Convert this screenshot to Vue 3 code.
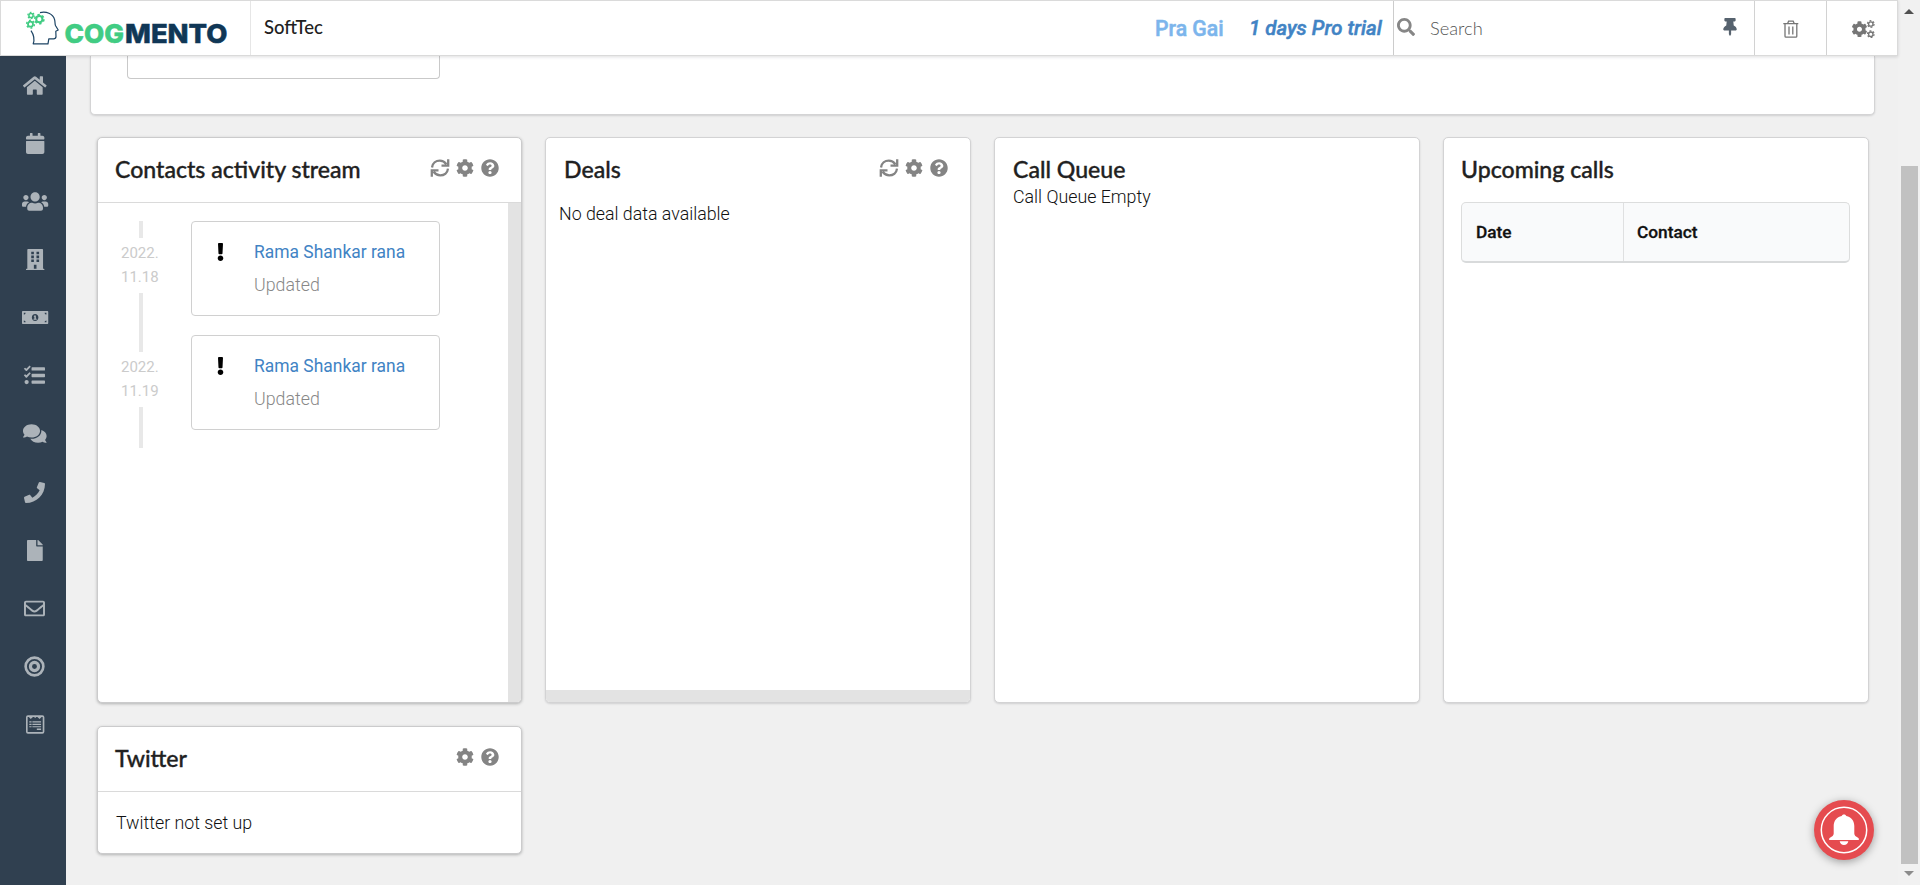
<script setup>
const home = 'M280.37 148.26L96 300.11V464a16 16 0 0 0 16 16l112.06-.29a16 16 0 0 0 15.92-16V368a16 16 0 0 1 16-16h64a16 16 0 0 1 16 16v95.64a16 16 0 0 0 16 16.05L464 480a16 16 0 0 0 16-16V300L295.67 148.26a12.19 12.19 0 0 0-15.3 0zM571.6 251.47L488 182.56V44.05a12 12 0 0 0-12-12h-56a12 12 0 0 0-12 12v72.61L318.47 43a48 48 0 0 0-61 0L4.34 251.47a12 12 0 0 0-1.6 16.9l25.5 31A12 12 0 0 0 45.15 301l235.22-193.74a12.19 12.19 0 0 1 15.3 0L530.9 301a12 12 0 0 0 16.9-1.6l25.5-31a12 12 0 0 0-1.7-16.93z'
const calendar = 'M12 192h424c6.6 0 12 5.4 12 12v260c0 26.5-21.5 48-48 48H48c-26.5 0-48-21.5-48-48V204c0-6.6 5.4-12 12-12zm436-44v-36c0-26.5-21.5-48-48-48h-48V12c0-6.6-5.4-12-12-12h-40c-6.6 0-12 5.4-12 12v52H160V12c0-6.6-5.4-12-12-12h-40c-6.6 0-12 5.4-12 12v52H48C21.5 64 0 85.5 0 112v36c0 6.6 5.4 12 12 12h424c6.6 0 12-5.4 12-12z'
const users = 'M96 224c35.3 0 64-28.7 64-64s-28.7-64-64-64-64 28.7-64 64 28.7 64 64 64zm448 0c35.3 0 64-28.7 64-64s-28.7-64-64-64-64 28.7-64 64 28.7 64 64 64zm32 32h-64c-17.6 0-33.5 7.1-45.1 18.6 40.3 22.1 68.9 62 75.1 109.4h66c17.7 0 32-14.3 32-32v-32c0-35.3-28.7-64-64-64zm-256 0c61.9 0 112-50.1 112-112S381.9 32 320 32 208 82.1 208 144s50.1 112 112 112zm76.8 32h-8.3c-20.8 10-43.9 16-68.5 16s-47.6-6-68.5-16h-8.3C179.6 288 128 339.6 128 403.2V432c0 26.5 21.5 48 48 48h288c26.5 0 48-21.5 48-48v-28.8c0-63.6-51.6-115.2-115.2-115.2zm-223.7-13.4C161.5 263.1 145.6 256 128 256H64c-35.3 0-64 28.7-64 64v32c0 17.7 14.3 32 32 32h65.9c6.3-47.4 34.9-87.3 75.2-109.4z'
const building = 'M436 480h-20V24c0-13-11-24-24-24H56C43 0 32 11 32 24v456H12c-7 0-12 5-12 12v20h448v-20c0-7-5-12-12-12zM128 64h64v64h-64zM128 160h64v64h-64zM128 256h64v64h-64zM256 64h64v64h-64zM256 160h64v64h-64zM256 256h64v64h-64zM192 384h64v96h-64z'
const money = 'M24 96h592c13 0 24 11 24 24v272c0 13-11 24-24 24H24c-13 0-24-11-24-24V120c0-13 11-24 24-24zM44 138v44c26 0 44-18 44-44zM596 138v44c-26 0-44-18-44-44zM44 374v-44c26 0 44 18 44 44zM596 374v-44c-26 0-44 18-44 44zM320 172c-46 0-80 38-80 84s34 84 80 84 80-38 80-84-34-84-80-84zM298 206h40v80h20v26h-76v-26h20v-48h-16z'
const tasks = 'M200 56h296q16 0 16 16v48q0 16-16 16H200q-16 0-16-16V72q0-16 16-16zM200 216h296q16 0 16 16v48q0 16-16 16H200q-16 0-16-16v-48q0-16 16-16zM200 376h296q16 0 16 16v48q0 16-16 16H200q-16 0-16-16v-48q0-16 16-16zM-4 92l30-28 32 28 78-78 30 30-92 98q-16 14-32 0zM-4 252l30-28 32 28 78-78 30 30-92 98q-16 14-32 0zM12 416a52 52 0 1 0 104 0 52 52 0 1 0-104 0z'
const comments = 'M416 192c0-88.4-93.1-160-208-160S0 103.6 0 192c0 34.3 14.1 65.9 38 92-13.4 30.2-35.5 54.2-35.8 54.5-2.2 2.3-2.8 5.7-1.5 8.7S4.8 352 8 352c36.6 0 66.9-12.3 88.7-25 32.2 15.7 70.3 25 111.3 25 114.9 0 208-71.6 208-160zm122 220c23.9-26 38-57.7 38-92 0-66.9-53.5-124.2-129.3-148.1.9 6.6 1.3 13.3 1.3 20.1 0 105.9-107.7 192-240 192-10.8 0-21.3-.8-31.7-1.9C207.8 439.6 281.8 480 368 480c41 0 79.1-9.2 111.3-25 21.8 12.7 52.1 25 88.7 25 3.2 0 6.1-1.9 7.3-4.8 1.3-2.9.7-6.3-1.5-8.7-.3-.3-22.4-24.2-35.8-54.5z'
const phone = 'M493.4 24.6l-104-24c-11.3-2.6-22.9 3.3-27.5 13.9l-48 112c-4.2 9.8-1.4 21.3 6.9 28l60.6 49.6c-36 76.7-98.9 140.5-177.2 177.2l-49.6-60.6c-6.8-8.3-18.2-11.1-28-6.9l-112 48C3.9 366.5-2 378.1.6 389.4l24 104C27.1 504.2 36.7 512 48 512c256.1 0 464-207.5 464-464 0-11.2-7.7-20.9-18.6-23.4z'
const file = 'M224 136V0H24C10.7 0 0 10.7 0 24v464c0 13.3 10.7 24 24 24h336c13.3 0 24-10.7 24-24V160H248c-13.2 0-24-10.8-24-24zm160-14.1v6.1H256V0h6.1c6.4 0 12.5 2.5 17 7l97.9 98c4.5 4.5 7 10.6 7 16.9z'
const envelope = 'M464 64H48C21.49 64 0 85.49 0 112v288c0 26.51 21.49 48 48 48h416c26.51 0 48-21.49 48-48V112c0-26.51-21.49-48-48-48zm0 48v40.805c-22.422 18.259-58.168 46.651-134.587 106.49-16.841 13.247-50.201 45.072-73.413 44.701-23.208.375-56.579-31.459-73.413-44.701C106.18 199.465 70.425 171.067 48 152.805V112h416zM48 400V214.398c22.914 18.251 55.409 43.862 104.938 82.646 21.857 17.205 60.134 55.186 103.062 54.955 42.717.231 80.509-37.199 103.053-54.947 49.528-38.783 82.032-64.401 104.947-82.653V400H48z'
const bullseye = 'M8 256a248 248 0 1 0 496 0 248 248 0 1 0-496 0zM72 256a184 184 0 1 0 368 0 184 184 0 1 0-368 0zM118 256a138 138 0 1 0 276 0 138 138 0 1 0-276 0zM196 256a60 60 0 1 0 120 0 60 60 0 1 0-120 0z'
const form = 'M48 32h352q48 0 48 48v352q0 48-48 48H48q-48 0-48-48V80q0-48 48-48zM40 72v360q0 8 8 8h352q8 0 8-8V72h-28l-48 52-54-52h-26l-28 28-28-28h-26l-54 52-48-52zM80 176h56v30H80zM80 236h56v30H80zM80 296h56v30H80zM156 176h212v30H156zM156 236h212v30H156zM156 296h212v30H156zM264 356h104v36H264z'
const cog = 'M487.4 315.7l-42.6-24.6c4.3-23.2 4.3-47 0-70.2l42.6-24.6c4.9-2.8 7.1-8.6 5.5-14-11.1-35.6-30-67.8-54.7-94.6-3.8-4.1-10-5.1-14.8-2.3L380.8 110c-17.9-15.4-38.5-27.3-60.8-35.1V25.8c0-5.6-3.9-10.5-9.4-11.7-36.7-8.2-74.3-7.8-109.2 0-5.5 1.2-9.4 6.1-9.4 11.7V75c-22.2 7.9-42.8 19.8-60.8 35.1L88.7 85.5c-4.9-2.8-11-1.9-14.8 2.3-24.7 26.7-43.6 58.9-54.7 94.6-1.7 5.4.6 11.2 5.5 14L67.3 221c-4.3 23.2-4.3 47 0 70.2l-42.6 24.6c-4.9 2.8-7.1 8.6-5.5 14 11.1 35.6 30 67.8 54.7 94.6 3.8 4.1 10 5.1 14.8 2.3l42.6-24.6c17.9 15.4 38.5 27.3 60.8 35.1v49.2c0 5.6 3.9 10.5 9.4 11.7 36.7 8.2 74.3 7.8 109.2 0 5.5-1.2 9.4-6.1 9.4-11.7v-49.2c22.2-7.9 42.8-19.8 60.8-35.1l42.6 24.6c4.9 2.8 11 1.9 14.8-2.3 24.7-26.7 43.6-58.9 54.7-94.6 1.5-5.5-.7-11.3-5.6-14.1zM256 336c-44.1 0-80-35.9-80-80s35.9-80 80-80 80 35.9 80 80-35.9 80-80 80z'
const question = 'M504 256c0 136.997-111.043 248-248 248S8 392.997 8 256C8 119.083 119.043 8 256 8s248 111.083 248 248zM262.655 90c-54.497 0-89.255 22.957-116.549 63.758-3.536 5.286-2.353 12.415 2.715 16.258l34.699 26.31c5.205 3.947 12.621 3.008 16.665-2.122 17.864-22.658 30.113-35.797 57.303-35.797 20.429 0 45.698 13.148 45.698 32.958 0 14.976-12.363 22.667-32.534 33.976C247.128 238.528 216 254.941 216 296v4c0 6.627 5.373 12 12 12h56c6.627 0 12-5.373 12-12v-1.333c0-28.462 83.186-29.647 83.186-106.667 0-58.002-60.165-102-116.531-102zM256 338c-25.365 0-46 20.635-46 46 0 25.364 20.635 46 46 46s46-20.636 46-46c0-25.365-20.635-46-46-46z'
const search = 'M505 442.7L405.3 343c-4.5-4.5-10.6-7-17-7H372c27.6-35.3 44-79.7 44-128C416 93.1 322.9 0 208 0S0 93.1 0 208s93.1 208 208 208c48.3 0 92.7-16.4 128-44v16.3c0 6.4 2.5 12.5 7 17l99.7 99.7c9.4 9.4 24.6 9.4 33.9 0l28.3-28.3c9.4-9.4 9.4-24.6.1-34zM208 336c-70.7 0-128-57.2-128-128 0-70.7 57.2-128 128-128 70.7 0 128 57.2 128 128 0 70.7-57.2 128-128 128z'
const pin = 'M298.028 214.267L285.793 96H328c13.255 0 24-10.745 24-24V24c0-13.255-10.745-24-24-24H56C42.745 0 32 10.745 32 24v48c0 13.255 10.745 24 24 24h42.207L85.972 214.267C37.465 236.82 0 277.261 0 328c0 13.255 10.745 24 24 24h136v104.007c0 1.242.289 2.467.845 3.578l24 48c2.941 5.882 11.364 5.893 14.311 0l24-48a8.008 8.008 0 0 0 .845-3.578V352h136c13.255 0 24-10.745 24-24-.001-51.183-37.983-91.42-85.973-113.733z'
const exclamation = 'M176 432c0 44.112-35.888 80-80 80s-80-35.888-80-80 35.888-80 80-80 80 35.888 80 80zM25.26 25.199l13.6 272C39.499 309.972 50.041 320 62.83 320h66.34c12.789 0 23.331-10.028 23.97-22.801l13.6-272C167.425 11.49 156.496 0 142.77 0H49.23C35.504 0 24.575 11.49 25.26 25.199z'

const nav = [
  { name: 'home', w: 576, d: home },
  { name: 'calendar', w: 448, d: calendar },
  { name: 'contacts', w: 640, d: users },
  { name: 'companies', w: 448, d: building },
  { name: 'deals', w: 640, d: money },
  { name: 'tasks', w: 512, d: tasks },
  { name: 'comments', w: 576, d: comments },
  { name: 'calls', w: 512, d: phone },
  { name: 'documents', w: 384, d: file },
  { name: 'email', w: 512, d: envelope },
  { name: 'campaigns', w: 512, d: bullseye },
  { name: 'forms', w: 448, d: form },
]

const events = [
  { id: 1, year: '2022.', day: '11.18', name: 'Rama Shankar rana', action: 'Updated' },
  { id: 2, year: '2022.', day: '11.19', name: 'Rama Shankar rana', action: 'Updated' },
]
</script>

<template>
  <div class="app">
    <div class="page">
      <header class="topbar">
        <div class="brand">
          <svg width="249" height="54" viewBox="1 1 249 54">
            <g fill="none" stroke="#1d4464" stroke-width="1.2" stroke-linejoin="round">
              <path d="M40 12.6c6-1.6 13 1 14.600 7 .7 2.600.1 4.400 1 6.200l2.600 4.200-2.400 1.200.2 5.400c-.1 1.600-1 2.200-2.400 2.200h-4.800l-.8 5H33.200c1.600-4.500.6-9-2.200-13.200" />
            </g>
            <g fill="none" stroke="#41cc83">
              <circle cx="31" cy="15.500" r="2.100" stroke-width="1.500" />
              <circle cx="31" cy="15.500" r="3.200" stroke-width="1.200" stroke-dasharray="1.700 1.650" />
              <circle cx="39.300" cy="19.200" r="3.100" stroke-width="2" />
              <circle cx="39.300" cy="19.200" r="4.600" stroke-width="1.600" stroke-dasharray="2.400 2.410" />
              <circle cx="30.500" cy="24.200" r="2.500" stroke-width="1.800" />
              <circle cx="30.500" cy="24.200" r="3.900" stroke-width="1.400" stroke-dasharray="2 2.080" />
            </g>
            <text class="logo" x="64.500" y="43" textLength="59.500" lengthAdjust="spacingAndGlyphs" fill="#41cc83" stroke="#41cc83">COG</text>
            <text class="logo" x="125" y="43" textLength="102.500" lengthAdjust="spacingAndGlyphs" fill="#103756" stroke="#103756">MENTO</text>
          </svg>
        </div>
        <div class="company">SoftTec</div>
        <div class="user">Pra Gai</div>
        <div class="trial">1 days Pro trial</div>
        <div class="search">
          <svg class="search-icon" viewBox="0 0 512 512" width="18" height="18"><path :d="search" /></svg>
          <span class="placeholder">Search</span>
          <svg class="pin" viewBox="0 0 384 512" width="14" height="18"><path :d="pin" /></svg>
        </div>
        <div class="tool">
          <svg width="16" height="18" viewBox="0 0 16 18" fill="none" stroke="#767676" stroke-width="1.300">
            <path d="M.3 3.600h15M4.600 3.400L5.600 1.200h4.600l1 2.200M2 4v12.200q0 1 1 1h9.800q1 0 1-1V4M6 6.500v8M9.800 6.500v8" />
          </svg>
        </div>
        <div class="tool last">
          <svg width="23" height="18" viewBox="0 0 23 18">
            <g transform="translate(-.6 1.100) scale(.0315)"><path :d="cog" fill="#767676" /></g>
            <g fill="none" stroke="#767676">
              <circle cx="18.800" cy="4" r="2.200" stroke-width="1.300" />
              <circle cx="18.800" cy="4" r="3.300" stroke-width="1.200" stroke-dasharray="1.900 1.550" />
              <circle cx="18.800" cy="14.200" r="2.200" stroke-width="1.300" />
              <circle cx="18.800" cy="14.200" r="3.300" stroke-width="1.200" stroke-dasharray="1.900 1.550" />
            </g>
          </svg>
        </div>
      </header>

      <div class="body">
        <nav class="sidebar">
          <a v-for="item in nav" :key="item.name" class="nav-item">
            <svg :viewBox="`0 0 ${item.w} 512`" :width="item.w * 0.041" height="21"><path :d="item.d" fill-rule="evenodd" /></svg>
          </a>
        </nav>

        <main class="content">
          <section class="upper-panel"><div class="upper-box"></div></section>

          <div class="grid">
            <section class="card stream">
              <div class="card-head">
                <h2>Contacts activity stream</h2>
                <div class="actions">
                  <svg width="20" height="20" viewBox="0 0 20 20" fill="none" stroke="#848484" stroke-width="2.300"><path d="M2 9.500C2.500 5 6 2.600 9.800 2.600c3 0 5 1.400 6.600 3.600M18.200 1.200v6.500h-6.700M18 10.700c-.5 4.500-4 6.700-7.800 6.700-3 0-5-1.400-6.600-3.600M1.800 18.800v-6.500h6.700" /></svg>
                  <svg width="18" height="18" viewBox="0 0 512 512"><path :d="cog" /></svg>
                  <svg width="18" height="18" viewBox="0 0 512 512"><path :d="question" /></svg>
                </div>
              </div>
              <div class="stream-body">
                <div class="timeline">
                  <div v-for="e in events" :key="e.id" class="event">
                    <div class="rail">
                      <i class="bar"></i>
                      <div class="date">{{ e.year }}<br />{{ e.day }}</div>
                    </div>
                    <div class="event-box">
                      <svg width="7" height="18" viewBox="0 0 192 512"><path :d="exclamation" /></svg>
                      <div class="event-text">
                        <a class="name">{{ e.name }}</a>
                        <div class="action">{{ e.action }}</div>
                      </div>
                    </div>
                  </div>
                  <i class="bar last"></i>
                </div>
                <div class="track-v"></div>
              </div>
            </section>

            <section class="card deals">
              <div class="card-head">
                <h2>Deals</h2>
                <div class="actions">
                  <svg width="20" height="20" viewBox="0 0 20 20" fill="none" stroke="#848484" stroke-width="2.300"><path d="M2 9.500C2.500 5 6 2.600 9.800 2.600c3 0 5 1.400 6.600 3.600M18.200 1.200v6.500h-6.700M18 10.700c-.5 4.500-4 6.700-7.800 6.700-3 0-5-1.400-6.600-3.600M1.800 18.800v-6.500h6.700" /></svg>
                  <svg width="18" height="18" viewBox="0 0 512 512"><path :d="cog" /></svg>
                  <svg width="18" height="18" viewBox="0 0 512 512"><path :d="question" /></svg>
                </div>
              </div>
              <p class="deals-text">No deal data available</p>
              <div class="track-h"></div>
            </section>

            <section class="card queue">
              <div class="card-head"><h2>Call Queue</h2></div>
              <p class="queue-text">Call Queue Empty</p>
            </section>

            <section class="card upcoming">
              <div class="card-head"><h2>Upcoming calls</h2></div>
              <div class="table">
                <div class="th">Date</div>
                <div class="th">Contact</div>
              </div>
            </section>

            <section class="card twitter">
              <div class="card-head">
                <h2>Twitter</h2>
                <div class="actions">
                  <svg width="18" height="18" viewBox="0 0 512 512"><path :d="cog" /></svg>
                  <svg width="18" height="18" viewBox="0 0 512 512"><path :d="question" /></svg>
                </div>
              </div>
              <p class="twitter-text">Twitter not set up</p>
            </section>
          </div>
        </main>
      </div>
    </div>

    <div class="scrollbar">
      <svg class="arrow" width="10" height="5" viewBox="0 0 10 5"><path d="M0 5L5 0l5 5z" fill="#505050" /></svg>
      <div class="thumb"></div>
      <svg class="arrow down" width="10" height="5" viewBox="0 0 10 5"><path d="M0 0l5 5 5-5z" fill="#8b8b8b" /></svg>
    </div>

    <button class="bell">
      <svg width="60" height="60" viewBox="0 0 60 60">
        <circle cx="30" cy="30" r="22.700" fill="none" stroke="#fff" stroke-width="1.500" />
        <path d="M30 14.500c1.300 0 2 .7 2.300 1.500 5 1.200 8 4.800 8 10v7.500c0 2 1.500 3 3.700 4.200 1 .6 1.200 2.300.5 2.300h-29c-.7 0-.5-1.700.5-2.300 2.200-1.200 3.700-2.200 3.700-4.200V26c0-5.200 3-8.800 8-10 .3-.8 1-1.500 2.300-1.500zM25.700 41.200h8.600c-.3 2.400-2 3.800-4.300 3.800s-4-1.400-4.300-3.800z" fill="#fff" />
      </svg>
    </button>
  </div>
</template>

<style>
html, body { margin: 0; overflow: hidden; background: #f0f0f0; }
</style>

<style scoped>
* { box-sizing: border-box; }
.app { position: relative; display: flex; width: 1920px; height: 885px; background: #f0f0f0; font-family: Roboto, "Liberation Sans", sans-serif; font-size: 17.800px; font-weight: 300; color: #111; overflow: hidden; }
.page { width: 1898px; display: flex; flex-direction: column; }
svg { display: block; flex: none; }
h2, p { margin: 0; }

.topbar { position: relative; z-index: 2; height: 56px; flex: none; display: flex; background: #fff; border: 1px solid #dadada; box-shadow: 0 1px 3px rgba(34, 36, 38, .15); }
.brand { width: 250px; border-right: 1px solid #e6e6e6; }
.logo { font-family: Inter, "Liberation Sans", sans-serif; font-weight: 800; font-size: 26px; stroke-width: .5px; }
.company { font: 500 18.500px/53px Lato, sans-serif; padding-left: 13px; width: 904px; color: #212121; }
.user { width: 94px; font-size: 21.200px; line-height: 56px; font-weight: 500; -webkit-text-stroke: .5px; color: #7cb5ec; white-space: nowrap; }
.trial { width: 144px; font-size: 20.400px; line-height: 54px; font-weight: 500; -webkit-text-stroke: .5px; font-style: italic; color: #4183c4; white-space: nowrap; }
.search { flex: 1; display: flex; border-left: 1px solid #ccc; padding-left: 3px; }
.search-icon { margin-top: 17px; fill: #868686; }
.placeholder { margin-left: 15px; flex: 1; font: 300 18.300px/54px Lato, sans-serif; color: #555; }
.pin { margin: 17px 17px 0 0; fill: #56626e; }
.tool { width: 72px; border-left: 1px solid #d2d2d2; display: flex; justify-content: center; padding-top: 19px; }
.tool.last { width: 71px; padding-left: 3px; }

.body { flex: 1; display: flex; min-height: 0; }
.sidebar { width: 66px; background: #304050; display: flex; flex-direction: column; padding: 0 0 0 3.800px; }
.nav-item { height: 58.150px; display: flex; align-items: center; justify-content: center; }
.nav-item svg { fill: #acb3b9; overflow: visible; }
.content { flex: 1; }

.upper-panel { margin-left: 24px; width: 1785px; height: 59px; background: #fff; border: 1px solid #d4d4d5; border-top: 0; border-radius: 0 0 5px 5px; box-shadow: 0 1px 2px rgba(34, 36, 38, .15); }
.upper-box { margin-left: 36px; width: 313px; height: 23px; border: 1px solid #c9c9c9; border-top: 0; border-radius: 0 0 4px 4px; }
.grid { margin: 22px 0 0 31px; display: grid; grid-template-columns: 425px 426px 426px 426px; grid-template-rows: 566px 128px; gap: 23px; }
.card { display: flex; flex-direction: column; background: #fff; border: 1px solid #d3d3d4; border-radius: 5px; box-shadow: 0 1px 2px rgba(34, 36, 38, .15); overflow: hidden; }
.stream, .twitter { border-color: #cbcbcc; box-shadow: 0 1px 3px rgba(34, 36, 38, .3); }
.card-head { height: 65px; flex: none; display: flex; justify-content: space-between; padding: 0 22.500px 0 17px; border-bottom: 1px solid transparent; }
.stream .card-head, .twitter .card-head { border-bottom-color: #dadada; }
h2 { font: 500 23.100px/63px Lato, sans-serif; -webkit-text-stroke: .35px; color: #212121; }
.deals h2, .queue h2 { padding-left: 1px; }
.actions { display: flex; align-items: center; gap: 7px; height: 60px; }
.actions svg { fill: #848484; }
.actions svg[fill="none"] { fill: none; margin-right: -1px; }

.stream-body { flex: 1; display: flex; justify-content: space-between; }
.track-v { width: 13px; background: #e3e3e3; }
.timeline { padding: 18px 0 0 20px; }
.event { display: flex; height: 114px; }
.rail { width: 73px; display: flex; flex-direction: column; }
.bar { display: block; width: 4px; background: #e8e8e8; margin-left: 21px; height: 17px; }
.event + .event .bar { margin-top: -42px; height: 59px; }
.bar.last { margin-top: -42px; height: 41px; }
.date { margin-top: 3px; padding-left: 3px; font-size: 15px; font-weight: 400; line-height: 24px; color: #cbcbcb; }
.event-box { width: 249px; height: 95px; border: 1px solid #d0d0d0; border-radius: 4px; display: flex; padding-left: 25px; }
.event-box svg { margin-top: 21px; fill: #000; }
.event-text { margin-left: 30px; padding-top: 13px; }
.name { display: block; line-height: 34px; color: #4183c4; font-weight: 400; font-size: 17.450px; }
.action { line-height: 31px; color: #888; }

.deals-text { flex: 1; padding: 0 13px; line-height: 22px; }
.track-h { height: 12px; background: #e3e3e3; }
.queue-text { margin-top: -17px; padding-left: 18px; line-height: 22px; }
.table { margin: 0 17px; width: 389px; height: 61px; display: flex; background: #f9fafb; border: 1px solid #dcdddd; border-bottom: 2px solid #d8dadb; border-radius: 5px; margin-top: -1px; }
.th { width: 225px; padding-left: 13px; font-size: 17.300px; font-weight: 500; -webkit-text-stroke: .3px; line-height: 59px; }
.th:first-child { width: 162px; padding-left: 14px; border-right: 1px solid #dfe0e1; }
.twitter-text { padding-left: 18px; line-height: 61px; }

.scrollbar { width: 22px; background: #f1f1f1; display: flex; flex-direction: column; }
.arrow { margin: 9px 0 0 6px; }
.thumb { margin: 152px 0 0 3px; width: 17px; height: 698px; background: #c1c1c1; }
.arrow.down { margin-top: 7px; }
.bell { position: absolute; left: 1814px; top: 800px; width: 60px; height: 60px; padding: 0; border: 0; border-radius: 50%; background: #e54b4f; box-shadow: 0 2px 8px rgba(0, 0, 0, .35); z-index: 3; }
</style>
